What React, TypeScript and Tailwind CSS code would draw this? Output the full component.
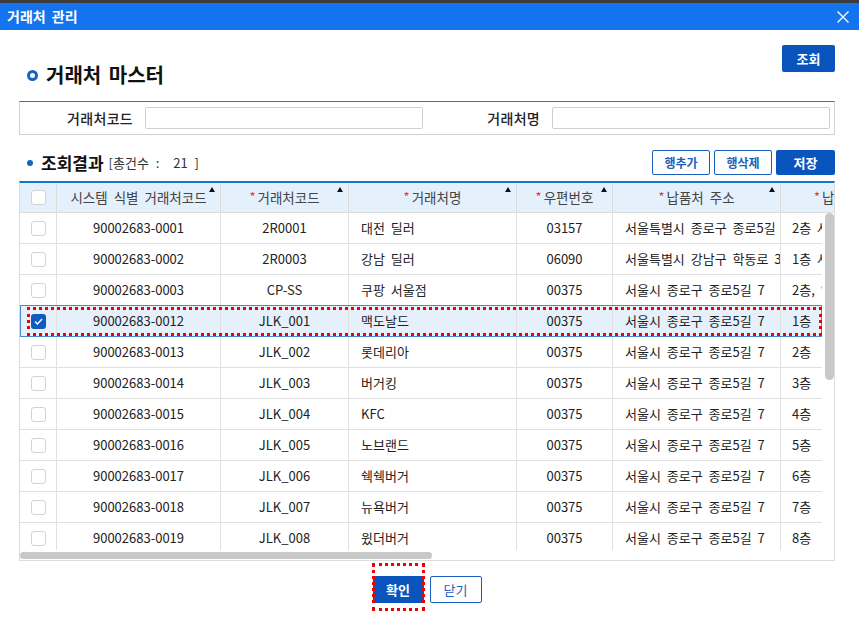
type Row = {
  id: string;
  code: string;
  name: string;
  zip: string;
  addr: string;
  detail: string;
  checked?: boolean;
};

const rows: Row[] = [
  { id: '90002683-0001', code: '2R0001', name: '대전 딜러', zip: '03157', addr: '서울특별시 종로구 종로5길 7', detail: '2층 사무실' },
  { id: '90002683-0002', code: '2R0003', name: '강남 딜러', zip: '06090', addr: '서울특별시 강남구 학동로 343', detail: '1층 사무실' },
  { id: '90002683-0003', code: 'CP-SS', name: '쿠팡 서울점', zip: '00375', addr: '서울시 종로구 종로5길 7', detail: '2층, 일부' },
  { id: '90002683-0012', code: 'JLK_001', name: '맥도날드', zip: '00375', addr: '서울시 종로구 종로5길 7', detail: '1층', checked: true },
  { id: '90002683-0013', code: 'JLK_002', name: '롯데리아', zip: '00375', addr: '서울시 종로구 종로5길 7', detail: '2층' },
  { id: '90002683-0014', code: 'JLK_003', name: '버거킹', zip: '00375', addr: '서울시 종로구 종로5길 7', detail: '3층' },
  { id: '90002683-0015', code: 'JLK_004', name: 'KFC', zip: '00375', addr: '서울시 종로구 종로5길 7', detail: '4층' },
  { id: '90002683-0016', code: 'JLK_005', name: '노브랜드', zip: '00375', addr: '서울시 종로구 종로5길 7', detail: '5층' },
  { id: '90002683-0017', code: 'JLK_006', name: '쉑쉑버거', zip: '00375', addr: '서울시 종로구 종로5길 7', detail: '6층' },
  { id: '90002683-0018', code: 'JLK_007', name: '뉴욕버거', zip: '00375', addr: '서울시 종로구 종로5길 7', detail: '7층' },
  { id: '90002683-0019', code: 'JLK_008', name: '윘더버거', zip: '00375', addr: '서울시 종로구 종로5길 7', detail: '8층' },
];

function SortMark() {
  return (
    <svg className="absolute top-[4px] right-[5px]" width="6" height="5" viewBox="0 0 6 5">
      <path d="M3 0 L6 5 L0 5 Z" fill="#111" />
    </svg>
  );
}

function Check({ checked }: { checked?: boolean }) {
  if (checked) {
    return (
      <span className="w-[15px] h-[15px] rounded-[3px] bg-[#0f5bbf] flex items-center justify-center">
        <svg width="9" height="7" viewBox="0 0 9 7">
          <path d="M1 3.6 L3.4 6 L8 1" stroke="#fff" strokeWidth="1.4" fill="none" />
        </svg>
      </span>
    );
  }
  return <span className="w-[15px] h-[15px] rounded-[3px] border border-[#d2d2d2] bg-white" />;
}

function Req() {
  return <span className="text-[#e53935] text-[13px] mr-[2px] relative -top-[1px]">*</span>;
}

export default function App() {
  return (
    <div className="w-[859px] h-[625px] bg-white overflow-hidden font-['Noto_Sans_CJK_KR','Noto_Sans',sans-serif] text-[13px] text-[#222] [word-spacing:3px]">
      <div className="h-[3px] bg-[#3c3c3c]" />
      <div className="h-[27px] bg-[#1473ef] flex items-center justify-between pl-[7px] pr-[10px]">
        <span className="text-white font-bold text-[14px]">거래처 관리</span>
        <svg width="12" height="12" viewBox="0 0 12 12">
          <path d="M0.5 0.5 L11.5 11.5 M11.5 0.5 L0.5 11.5" stroke="#fff" strokeWidth="1.4" />
        </svg>
      </div>

      {/* 상단 타이틀 */}
      <div className="h-[71px] flex justify-between items-start pl-[27px] pr-[24px] pt-[15px]">
        <div className="flex items-center gap-[8px] mt-[17px]">
          <span className="w-[11px] h-[11px] rounded-full border-[3px] border-[#1565c0]" />
          <span className="text-[20px] font-bold text-[#111] leading-[26px]">거래처 마스터</span>
        </div>
        <button className="w-[53px] h-[27px] bg-[#0a55bd] rounded-[2px] text-white font-bold text-[13px]">조회</button>
      </div>

      {/* 검색 */}
      <div className="mx-[19px] w-[816px] border-t border-t-[#0b82e0] border-x border-b border-[#d0d0d0] h-[34px] flex items-center">
        <span className="w-[113px] text-right font-medium text-[14px] tracking-[0.3px]">거래처코드</span>
        <input className="ml-[12px] w-[278px] h-[22px] border border-[#cfcfcf] rounded-[2px]" />
        <span className="w-[117px] text-right font-medium text-[14px] tracking-[0.3px]">거래처명</span>
        <input className="ml-[12px] w-[278px] h-[22px] border border-[#cfcfcf] rounded-[2px]" />
      </div>

      {/* 조회결과 */}
      <div className="mt-[15px] mx-[19px] w-[816px] h-[25px] flex items-center justify-between">
        <div className="flex items-center pl-[8px]">
          <span className="w-[6px] h-[6px] rounded-full bg-[#1565c0] mr-[8px]" />
          <span className="text-[17px] font-bold text-[#111] [word-spacing:0px]">조회결과</span>
          <span className="ml-[5px] text-[13px] text-[#333] [word-spacing:4px]">[총건수 :&nbsp; 21 ]</span>
        </div>
        <div className="flex gap-[4px]">
          <button className="w-[58px] h-[25px] border border-[#1a5fc0] rounded-[2px] text-[#1a5fc0] font-bold text-[12px]">행추가</button>
          <button className="w-[58px] h-[25px] border border-[#1a5fc0] rounded-[2px] text-[#1a5fc0] font-bold text-[12px]">행삭제</button>
          <button className="w-[59px] h-[25px] bg-[#0a55bd] rounded-[2px] text-white font-bold text-[13px]">저장</button>
        </div>
      </div>

      {/* 그리드 */}
      <div className="mt-[6px] mx-[19px] w-[816px] border-t-2 border-t-[#1772d0] border-x border-b border-[#dcdcdc]">
        <div className="h-[30px] bg-[#e4f0fc] border-b border-[#dcdcdc] flex overflow-hidden text-[#444] text-[13.5px]">
          <div className="w-[37px] shrink-0 border-r border-[#dcdcdc] flex items-center justify-center">
            <Check />
          </div>
          <div className="w-[164px] shrink-0 border-r border-[#dcdcdc] flex items-center justify-center relative">
            시스템 식별 거래처코드<SortMark />
          </div>
          <div className="w-[128px] shrink-0 border-r border-[#dcdcdc] flex items-center justify-center relative">
            <Req />거래처코드<SortMark />
          </div>
          <div className="w-[168px] shrink-0 border-r border-[#dcdcdc] flex items-center justify-center relative">
            <Req />거래처명<SortMark />
          </div>
          <div className="w-[96px] shrink-0 border-r border-[#dcdcdc] flex items-center justify-center relative">
            <Req />우편번호<SortMark />
          </div>
          <div className="w-[168px] shrink-0 border-r border-[#dcdcdc] flex items-center justify-center relative">
            <Req />납품처 주소<SortMark />
          </div>
          <div className="w-[168px] shrink-0 border-r border-[#dcdcdc] flex items-center justify-center relative">
            <Req />납품처 상세주소<SortMark />
          </div>
        </div>

        <div className="flex h-[337px]">
          <div className="w-[802px] overflow-hidden">
            {rows.map((r) => (
              <div
                key={r.id}
                className={`relative flex h-[31px] w-[930px] border-b border-[#e0e0e0] ${r.checked ? 'bg-[#e5f0fb]' : 'bg-white'}`}
              >
                <div className="w-[37px] shrink-0 border-r border-[#e0e0e0] flex items-center justify-center">
                  <Check checked={r.checked} />
                </div>
                <div className="w-[164px] shrink-0 border-r border-[#e0e0e0] flex items-center justify-center">{r.id}</div>
                <div className="w-[128px] shrink-0 border-r border-[#e0e0e0] flex items-center justify-center">{r.code}</div>
                <div className="w-[168px] shrink-0 border-r border-[#e0e0e0] flex items-center px-[12px] whitespace-nowrap overflow-hidden">{r.name}</div>
                <div className="w-[96px] shrink-0 border-r border-[#e0e0e0] flex items-center justify-center">{r.zip}</div>
                <div className="w-[168px] shrink-0 border-r border-[#e0e0e0] flex items-center pl-[12px] whitespace-nowrap overflow-hidden">{r.addr}</div>
                <div className="w-[168px] shrink-0 border-r border-[#e0e0e0] flex items-center pl-[11px] whitespace-nowrap overflow-hidden">{r.detail}</div>
                {r.checked && (
                  <>
                    <div className="absolute -top-px left-0 w-[802px] h-[32px] border border-[#4a88d4] pointer-events-none" />
                    <div className="absolute top-[1px] left-[7px] w-[795px] h-[29px] border-[3px] border-dotted border-[#ee0000] pointer-events-none" />
                  </>
                )}
              </div>
            ))}
          </div>
          <div className="w-[12px] pl-[3px]">
            <div className="w-[9px] h-[167px] rounded-full bg-[#c8c8c8]" />
          </div>
        </div>
        <div className="h-[10px] pt-[2px]">
          <div className="w-[412px] h-[7px] rounded-full bg-[#c8c8c8]" />
        </div>
      </div>

      {/* 하단 버튼 */}
      <div className="mt-[15px] flex justify-center gap-[6px] pr-[5px]">
        <div className="relative">
          <button className="w-[51px] h-[27px] bg-[#0a55bd] rounded-[2px] text-white font-bold text-[13px]">확인</button>
          <div className="absolute -top-[13px] -bottom-[8px] -left-[1px] -right-[1px] border-[3px] border-dotted border-[#ee0000] pointer-events-none" />
        </div>
        <button className="w-[52px] h-[27px] border border-[#1a5fc0] rounded-[2px] text-[#1a5fc0] text-[13px]">닫기</button>
      </div>
    </div>
  );
}
